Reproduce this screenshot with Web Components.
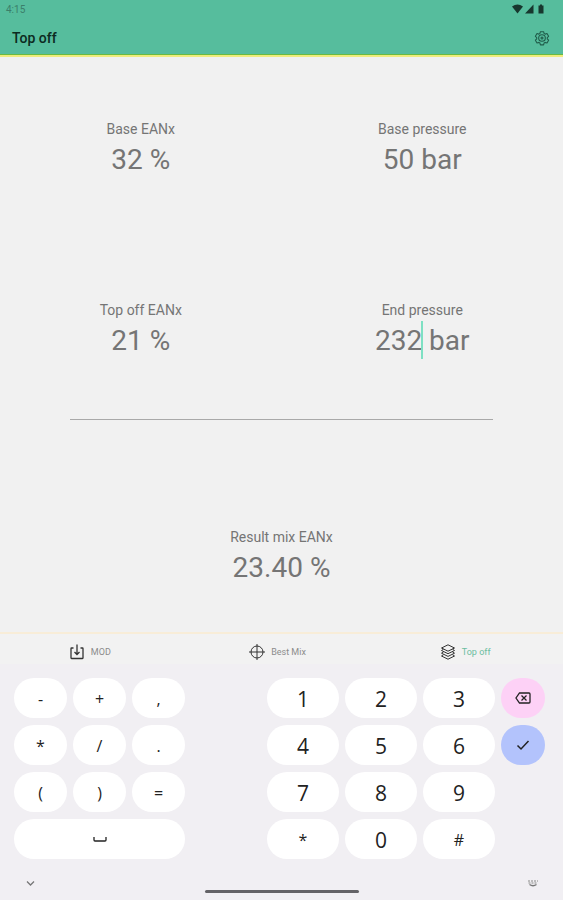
<!DOCTYPE html>
<html lang="en">
<head>
<meta charset="utf-8">
<meta name="viewport" content="width=device-width, initial-scale=1">
<title>Top off</title>
<style>
  body { margin: 0; font-family: Roboto, "Liberation Sans", sans-serif; color: #757575; background: #f1f1f1; }
</style>
</head>
<body>
<mix-app></mix-app>
<script>
const define = (name, html, setup) => {
  const template = document.createElement('template');
  template.innerHTML = '<style>*{box-sizing:border-box}</style>' + html;
  customElements.define(name, class extends HTMLElement {
    constructor() {
      super();
      this.attachShadow({ mode: 'open' }).append(template.content.cloneNode(true));
    }
    connectedCallback() { if (setup) setup(this, this.shadowRoot); }
  });
};

define('status-bar', `
  <style>
    :host { display: flex; align-items: center; justify-content: space-between; height: 18px; padding: 0 17px 0 6px; font-size: 10px; color: #3b7f6a; }
    svg { display: block; }
  </style>
  <span>4:15</span>
  <svg width="34" height="10" viewBox="0 0 34 10" fill="#17372e" aria-hidden="true">
    <path d="M0 2.6Q5.500-1.500 11 2.600L5.500 9.500Z"/>
    <path d="M21.500 .5V9.500H13Z"/>
    <path d="M27 1.500H28V.5H30V1.500H31.500V9.500H26.500V1.500Z"/>
  </svg>`);

define('app-bar', `
  <style>
    :host { display: flex; align-items: center; justify-content: space-between; height: 36px; padding: 3px 13px 0 12px; color: #0c2a21; }
    h1 { margin: 0; font-size: 14px; line-height: 20px; font-weight: 500; }
    button { display: block; padding: 0; border: 0; background: none; color: inherit; }
    svg { display: block; }
  </style>
  <h1><slot></slot></h1>
  <button aria-label="Settings">
    <svg width="16" height="16" viewBox="0 0 24 24" fill="none" stroke="#1f5b49" stroke-width="1.600" stroke-linejoin="round">
      <path d="M9.600 2.500h4.800l.7 2.700 1.700 1 2.700-.8 2.400 4.100-2 1.900v2l2 1.900-2.400 4.100-2.700-.8-1.700 1-.7 2.700H9.600l-.7-2.700-1.700-1-2.700.8-2.400-4.100 2-1.900v-2l-2-1.900 2.400-4.100 2.700.8 1.700-1Z"/>
      <circle cx="12" cy="12" r="5"/><circle cx="12" cy="12" r="1.500"/>
    </svg>
  </button>`);

define('mix-field', `
  <style>
    :host { display: flex; flex-direction: column; align-items: center; }
    label { font-size: 14px; line-height: 20px; padding-bottom: 2px; }
    .value { display: flex; font-size: 28px; line-height: 38px; white-space: pre; }
    .number { position: relative; }
    input { display: block; width: 100%; height: 38px; padding: 0; border: 0; outline: 0; background: none; font: inherit; color: inherit; }
    :host([active]) .number::after { content: ""; position: absolute; right: -1px; top: -1px; width: 2px; height: 38px; background: #7ee0c3; }
  </style>
  <label for="number"></label>
  <div class="value"><div class="number"><input id="number" inputmode="decimal"></div><span></span></div>`,
  (host, root) => {
    const value = host.getAttribute('value');
    root.querySelector('label').textContent = host.getAttribute('label');
    root.querySelector('input').value = value;
    root.querySelector('.number').style.width = value.length + 'ch';
    root.querySelector('span').textContent = ' ' + host.getAttribute('unit');
  });

define('mix-result', `
  <style>
    :host { display: flex; flex-direction: column; align-items: center; }
    label { font-size: 14px; line-height: 20px; padding-bottom: 2px; }
    output { font-size: 28px; line-height: 38px; }
  </style>
  <label for="mix">Result mix EANx</label>
  <output id="mix"><slot></slot></output>`);

define('mix-form', `
  <style>
    :host { flex: 1; display: grid; grid-template-columns: 1fr 1fr; grid-template-rows: 181fr 181fr 1px 212fr; align-items: center; }
    mix-field { padding-top: 2px; }
    hr { grid-column: 1 / -1; width: 75%; height: 1px; margin: 0 auto; border: 0; background: #a9a9a9; }
    mix-result { grid-column: 1 / -1; padding-top: 62px; }
  </style>
  <mix-field label="Base EANx" value="32" unit="%"></mix-field>
  <mix-field label="Base pressure" value="50" unit="bar"></mix-field>
  <mix-field label="Top off EANx" value="21" unit="%"></mix-field>
  <mix-field label="End pressure" value="232" unit="bar" active></mix-field>
  <hr>
  <mix-result>23.40 %</mix-result>`);

define('tab-link', `
  <style>
    :host { flex: 1; }
    a { display: flex; align-items: center; justify-content: center; gap: 6px; height: 36px; padding-right: 8px; font-size: 9px; color: #8c8c8c; text-decoration: none; }
    :host([selected]) a { color: #6bbd9f; }
  </style>
  <a href="#"><slot name="icon"></slot><slot></slot></a>`);

define('tab-bar', `
  <style>
    :host { display: flex; height: 32px; border-top: 2px solid #f8edd8; background: #f2f2f2; }
    svg { display: block; fill: none; stroke: #333; stroke-width: 1; }
  </style>
  <tab-link>
    <svg slot="icon" width="16" height="16" viewBox="0 0 16 16"><path stroke-width="1.300" d="M4.500 4H2.500Q2 4 2 4.500V14q0 .5.500.5h11q.5 0 .5-.5V4.500Q14 4 13.500 4h-2M8 .5v10M5.500 8 8 10.500 10.500 8"/></svg>MOD
  </tab-link>
  <tab-link>
    <svg slot="icon" width="16" height="16" viewBox="0 0 16 16"><circle cx="8" cy="8" r="6"/><path d="M8 0v16M0 8h16"/></svg>Best Mix
  </tab-link>
  <tab-link selected>
    <svg slot="icon" width="16" height="16" viewBox="0 0 16 16"><path d="M8 .8 14.500 4 8 7.200 1.500 4ZM3.500 5.200 1.500 6.500 8 9.700 14.500 6.500 12.500 5.200M3.500 8 1.500 9.200 8 12.400 14.500 9.200 12.500 8M3.500 10.700 1.500 12 8 15.200 14.500 12 12.500 10.700"/></svg>Top off
  </tab-link>`);

define('pad-key', `
  <style>
    :host { display: block; }
    button { display: flex; align-items: center; justify-content: center; width: 100%; height: 40px; padding: 2px 0 0; border: 0; border-radius: 20px; background: var(--key, #fff); color: #222; font: 16px/24px "Open Sans", "Noto Sans", sans-serif; }
    :host([digit]) button { font-size: 21px; }
    :host([icon]) button { padding: 0; }
  </style>
  <button><slot></slot></button>`,
  (host, root) => {
    const name = host.getAttribute('name');
    if (name) root.querySelector('button').setAttribute('aria-label', name);
  });

define('number-keyboard', `
  <style>
    :host { display: block; background: #f1eff3; }
    .keys { display: grid; grid-template-columns: repeat(3, 53fr) 70fr repeat(3, 72fr) 44fr; gap: 7px 6px; padding: 14px 18px 0 14px; }
    .erase { --key: #fdd1f6; }
    .done { --key: #b3c3fc; }
    .space { grid-column: span 3; }
    svg { display: block; fill: none; stroke: #222; stroke-width: 1.300; }
    footer { display: grid; grid-template-columns: 1fr 154px 1fr; align-items: center; height: 41px; padding: 7px 24px 0 24px; }
    footer button { display: block; padding: 0; border: 0; background: none; }
    footer button:last-child { justify-self: end; }
    .handle { align-self: end; height: 3px; margin-bottom: 7px; border-radius: 2px; background: #646367; }
    footer svg { stroke: #777; }
  </style>
  <div class="keys">
    <pad-key>-</pad-key><pad-key>+</pad-key><pad-key>,</pad-key><span></span>
    <pad-key digit>1</pad-key><pad-key digit>2</pad-key><pad-key digit>3</pad-key>
    <pad-key class="erase" icon name="Backspace"><svg width="16" height="12" viewBox="0 0 16 12"><path d="M4.500 1H14q1 0 1 1v8q0 1-1 1H4.500L1 6ZM6.500 3.500l5 5M11.500 3.500l-5 5"/></svg></pad-key>
    <pad-key>*</pad-key><pad-key>/</pad-key><pad-key>.</pad-key><span></span>
    <pad-key digit>4</pad-key><pad-key digit>5</pad-key><pad-key digit>6</pad-key>
    <pad-key class="done" icon name="Done"><svg width="14" height="12" viewBox="0 0 14 12"><path stroke-width="1.500" d="M1.500 6.500 5 10 12.500 2"/></svg></pad-key>
    <pad-key>(</pad-key><pad-key>)</pad-key><pad-key>=</pad-key><span></span>
    <pad-key digit>7</pad-key><pad-key digit>8</pad-key><pad-key digit>9</pad-key><span></span>
    <pad-key class="space" icon name="Space"><svg width="14" height="5" viewBox="0 0 14 5"><path d="M1 0V3Q1 4 2 4H12Q13 4 13 3V0"/></svg></pad-key><span></span>
    <pad-key>*</pad-key><pad-key digit>0</pad-key><pad-key>#</pad-key>
  </div>
  <footer>
    <button aria-label="Hide keyboard"><svg width="12" height="8" viewBox="0 0 12 8"><path d="M3 2.500 6.500 6 10 2.500"/></svg></button>
    <div class="handle"></div>
    <button aria-label="Switch keyboard"><svg width="12" height="8" viewBox="0 0 12 8"><path stroke="#aaa" d="M1 2H11M1.500 4H10.500" stroke-dasharray="2 1"/><path d="M2.500 5.500Q6 8 9.500 5.500"/></svg></button>
  </footer>`);

define('mix-app', `
  <style>
    :host { display: flex; flex-direction: column; min-height: 100vh; }
    header { background: #56bd9d; border-bottom: 1px solid #6aba42; }
    .accent { height: 2px; background: #f0ec7c; }
    main { flex: 1; display: flex; }
  </style>
  <header><status-bar></status-bar><app-bar>Top off</app-bar></header>
  <div class="accent"></div>
  <main><mix-form></mix-form></main>
  <tab-bar></tab-bar>
  <number-keyboard></number-keyboard>`);
</script>
</body>
</html>
